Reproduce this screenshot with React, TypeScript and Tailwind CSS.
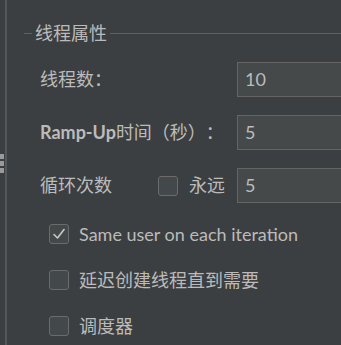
import React from "react";

const font = { fontFamily: 'Lato, "Noto Sans CJK SC", sans-serif' };

function Field({ value }: { value: string }) {
  return (
    <div className="flex h-[35px] w-[110px] shrink-0 items-center border border-[#646464] bg-[#45494a] pl-[7px] text-[18px] text-[#bbbbbb]">
      {value}
    </div>
  );
}

function Box({ checked }: { checked?: boolean }) {
  return (
    <div className="flex h-[20px] w-[20px] shrink-0 items-center justify-center rounded-[3px] border border-[#6b6b6b] bg-[#43494a]">
      {checked && (
        <svg width="16" height="16" viewBox="0 0 16 16" fill="none">
          <path d="M3 8.5 L6.5 12 L13 3.5" stroke="#c8c8c8" strokeWidth="1.6" strokeLinecap="round" strokeLinejoin="round" />
        </svg>
      )}
    </div>
  );
}

function Option({ label, checked }: { label: string; checked?: boolean }) {
  return (
    <div className="flex h-[20px] items-center gap-[10px] pl-[41px]">
      <Box checked={checked} />
      <span className="text-[#bbbbbb]">{label}</span>
    </div>
  );
}

export default function App() {
  return (
    <div
      className="flex h-[345px] w-[341px] overflow-hidden bg-[#3c3f41] text-[18px] [text-spacing-trim:space-all]"
      style={font}
    >
      {/* left splitter with grip */}
      <div className="flex w-[7px] shrink-0 flex-col gap-[2px] border-r-2 border-[#555859] pt-[154px]">
        <div className="h-[5px] w-[4px] bg-[#9a9a9a]" />
        <div className="h-[5px] w-[4px] bg-[#9a9a9a]" />
        <div className="h-[5px] w-[4px] bg-[#9a9a9a]" />
      </div>

      <div className="flex flex-1 flex-col pl-[17px] pt-[23px]">
        {/* group title */}
        <div className="flex h-[20px] items-center">
          <div className="h-px w-[8px] bg-[#5e6163]" />
          <span className="px-[3px] leading-none text-[#bbbbbb]">线程属性</span>
          <div className="h-px flex-1 bg-[#5e6163]" />
        </div>

        <div className="mt-[19px] flex flex-col gap-[18px] pl-[16px] text-[#bbbbbb]">
          <div className="flex items-center">
            <span className="w-[197px]">线程数：</span>
            <Field value="10" />
          </div>
          <div className="flex items-center">
            <span className="w-[197px] whitespace-nowrap">
              <b className="font-bold">Ramp-Up</b>时间（秒）：
            </span>
            <Field value="5" />
          </div>
          <div className="flex items-center">
            <span className="w-[118px]">循环次数</span>
            <Box />
            <span className="w-[59px] pl-[11px]">永远</span>
            <Field value="5" />
          </div>
        </div>

        <div className="mt-[21px] ml-[-16px] flex flex-col gap-[26px]">
          <Option label="Same user on each iteration" checked />
          <Option label="延迟创建线程直到需要" />
          <Option label="调度器" />
        </div>
      </div>
    </div>
  );
}
